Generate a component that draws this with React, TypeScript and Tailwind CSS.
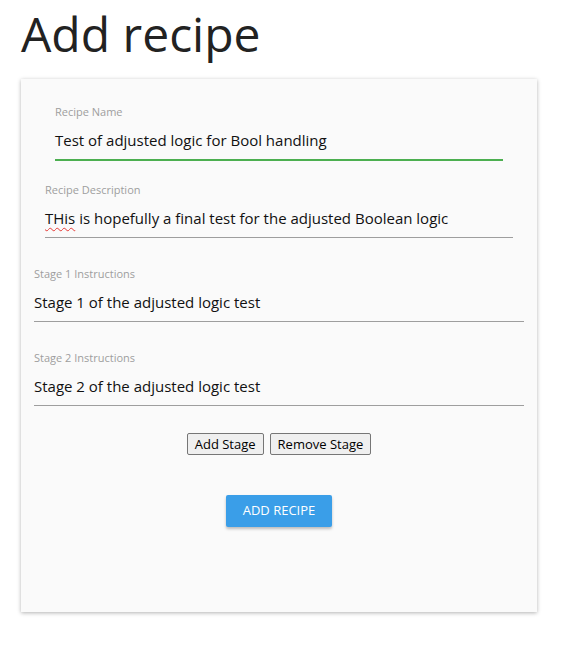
import React from 'react';

const FONT = { fontFamily: '"Open Sans", "Noto Sans", sans-serif' };

function Field({
  label,
  value,
  active,
  spell,
}: {
  label: string;
  value: string;
  active?: boolean;
  spell?: boolean;
}) {
  return (
    <div className="pt-[24px]">
      <div className="text-[11px] leading-[14px] text-[#9e9e9e]">{label}</div>
      <div
        className={`mt-[11px] pb-[9px] text-[15px] leading-[20px] text-[#111] ${
          active ? 'border-b-2 border-[#4caf50]' : 'border-b border-[#9e9e9e]'
        }`}
      >
        {spell ? (
          <>
            <span className="underline decoration-wavy decoration-[#e53935] decoration-1 underline-offset-[3px]">
              THis
            </span>
            {value.slice(4)}
          </>
        ) : (
          value
        )}
      </div>
    </div>
  );
}

export default function App() {
  return (
    <div className="min-h-[646px] bg-white px-[21px]" style={FONT}>
      <h1 className="pt-[2px] text-[48px] leading-[64px] font-normal text-[#222]">
        Add recipe
      </h1>
      <div className="mt-[13px] w-[516px] h-[533px] bg-[#fafafa] shadow-[0_1px_4px_rgba(0,0,0,0.3)] px-[13px]">
        <div className="px-[11px]">
          <div className="px-[10px] pt-[2px]">
            <Field label="Recipe Name" value="Test of adjusted logic for Bool handling" active />
          </div>
          <div className="-mt-[2px]">
            <Field
              label="Recipe Description"
              value="THis is hopefully a final test for the adjusted Boolean logic"
              spell
            />
          </div>
        </div>
        <div className="mt-[5px]">
          <Field label="Stage 1 Instructions" value="Stage 1 of the adjusted logic test" />
        </div>
        <div className="mt-[5px]">
          <Field label="Stage 2 Instructions" value="Stage 2 of the adjusted logic test" />
        </div>
        <div className="mt-[27px] flex justify-center gap-[6px]">
          <button
            className="h-[22px] px-[7px] border border-[#767676] rounded-[2px] bg-[#efefef] text-[13px] leading-[20px] text-black"
            style={FONT}
          >
            Add Stage
          </button>
          <button
            className="h-[22px] px-[7px] border border-[#767676] rounded-[2px] bg-[#efefef] text-[13px] leading-[20px] text-black"
            style={FONT}
          >
            Remove Stage
          </button>
        </div>
        <div className="mt-[40px] flex justify-center">
          <button
            className="h-[32px] w-[106px] rounded-[2px] bg-[#3a9ee8] text-[13px] text-white uppercase shadow-[0_2px_3px_rgba(0,0,0,0.25)]"
            style={FONT}
          >
            Add Recipe
          </button>
        </div>
      </div>
    </div>
  );
}
